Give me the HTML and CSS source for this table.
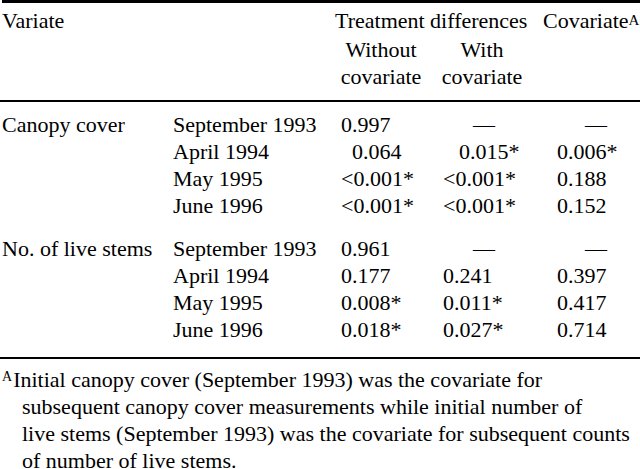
FILE: index.html
```html
<!DOCTYPE html>
<html>
<head>
<meta charset="utf-8">
<link rel="stylesheet" href="styles.css">
</head>
<body>
<div class="table">
  <div class="head">
    <div class="c1">Variate</div>
    <div class="span34">Treatment differences</div>
    <div class="c5 hcov">Covariate<sup class="sup">A</sup></div>
    <div class="c3 ctr">Without</div>
    <div class="c4 ctr">With</div>
    <div class="c3 ctr">covariate</div>
    <div class="c4 ctr">covariate</div>
  </div>
  <div class="body">
    <div class="group">
      <div class="c1">Canopy cover</div>
      <div class="c2">September 1993</div>
      <div class="c3 v-a">0.997</div>
      <div class="c4 dash4">—</div>
      <div class="c5 dash5">—</div>

      <div class="c2">April 1994</div>
      <div class="c3 v-b">0.064</div>
      <div class="c4 v-c">0.015*</div>
      <div class="c5 v-d">0.006*</div>

      <div class="c2">May 1995</div>
      <div class="c3 v-a">&lt;0.001*</div>
      <div class="c4 v-e">&lt;0.001*</div>
      <div class="c5 v-f">0.188</div>

      <div class="c2">June 1996</div>
      <div class="c3 v-a">&lt;0.001*</div>
      <div class="c4 v-e">&lt;0.001*</div>
      <div class="c5 v-f">0.152</div>
    </div>
    <div class="group second">
      <div class="c1">No. of live stems</div>
      <div class="c2">September 1993</div>
      <div class="c3 v-a">0.961</div>
      <div class="c4 dash4">—</div>
      <div class="c5 dash5">—</div>

      <div class="c2">April 1994</div>
      <div class="c3 v-a">0.177</div>
      <div class="c4 v-e">0.241</div>
      <div class="c5 v-f">0.397</div>

      <div class="c2">May 1995</div>
      <div class="c3 v-a">0.008*</div>
      <div class="c4 v-e">0.011*</div>
      <div class="c5 v-f">0.417</div>

      <div class="c2">June 1996</div>
      <div class="c3 v-a">0.018*</div>
      <div class="c4 v-e">0.027*</div>
      <div class="c5 v-f">0.714</div>
    </div>
  </div>
</div>
<p class="note"><sup class="nsup">A</sup>Initial canopy cover (September 1993) was the covariate for<br>subsequent canopy cover measurements while initial number of<br>live stems (September 1993) was the covariate for subsequent counts<br>of number of live stems.</p>
</body>
</html>
```

FILE: styles.css
```css
html, body {
  margin: 0;
  padding: 0;
  background: #fff;
}
body {
  font-family: "Liberation Serif", "Times New Roman", serif;
  font-size: 22px;
  line-height: 27px;
  color: #000;
  padding-left: 2px;
  width: 638px;
  overflow: hidden;
}
.table {
  border-top: 3px solid #000;
}
.head, .group {
  display: grid;
  grid-template-columns: 171px 162px 92px 110px 1fr;
}
.head {
  padding-top: 4px;
  padding-bottom: 10px;
  border-bottom: 2px solid #000;
  grid-template-rows: 29px 27px 27px;
  margin-left: -2px;
  padding-left: 2px;
  margin-right: 0;
}
.head .c1 { grid-column: 1; grid-row: 1; }
.span34 {
  grid-column: 3 / span 2;
  grid-row: 1;
  white-space: nowrap;
}
.hcov { grid-row: 1; padding-left: 6px; white-space: nowrap; }
.ctr { text-align: center; }
.c1 { grid-column: 1; white-space: nowrap; }
.c2 { grid-column: 2; white-space: nowrap; }
.c3 { grid-column: 3; white-space: nowrap; }
.c4 { grid-column: 4; white-space: nowrap; }
.c5 { grid-column: 5; white-space: nowrap; }
.group .c1 { grid-row: 1; }
.body {
  padding-top: 9px;
  padding-bottom: 14px;
  border-bottom: 2px solid #000;
  margin-left: -2px;
  padding-left: 2px;
}
.second { margin-top: 16px; }
.v-a { padding-left: 6px; }
.v-b { padding-left: 17px; }
.v-c { padding-left: 32px; }
.v-d { padding-left: 20px; }
.v-e { padding-left: 16px; }
.v-f { padding-left: 20px; }
.dash4 { padding-left: 46px; }
.dash5 { padding-left: 48px; }
.sup {
  font-size: 15px;
  vertical-align: 3px;
  line-height: 0;
}
.note {
  margin: 0;
  padding-top: 7px;
  padding-left: 20px;
  text-indent: -20px;
  white-space: nowrap;
}
.nsup {
  font-size: 14px;
  vertical-align: 6px;
  line-height: 0;
  margin-right: 1px;
}
```
